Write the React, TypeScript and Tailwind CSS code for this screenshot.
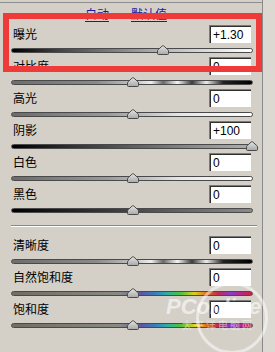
import React from 'react';

type Row = { label: string; value: string; track: string; pos: number };

const tracks = {
  bw: 'bg-[linear-gradient(to_right,#000_0%,#444_20%,#bbb_65%,#fff_100%)]',
  contrast:
    'bg-[linear-gradient(to_right,#6e6e6e_0%,#8a8a8a_35%,#c8c8c8_52%,#eeeeee_58%,#6a6a6a_63%,#f4f4f4_69%,#3c3c3c_75%,#ededed_81%,#222_88%,#000_100%)]',
  grayWhite: 'bg-[linear-gradient(to_right,#6a6a6a_0%,#9a9a9a_40%,#e6e6e6_70%,#fff_100%)]',
  blackGray: 'bg-[linear-gradient(to_right,#000_0%,#3a3a3a_30%,#8a8a8a_75%,#b0b0b0_100%)]',
  blackMid: 'bg-[linear-gradient(to_right,#000_0%,#2a2a2a_30%,#6a6a6a_75%,#8a8a8a_100%)]',
  rainbow:
    'bg-[linear-gradient(to_right,#6e6e66_0%,#8a8a84_45%,#5a5aa0_54%,#3a7fc0_60%,#30b0a0_65%,#4cc040_70%,#d8d020_76%,#e07020_81%,#c02a50_86%,#8a3cc8_91%,#b02a90_95%,#d0203a_100%)]',
};

const rowsTop: Row[] = [
  { label: '曝光', value: '+1.30', track: tracks.bw, pos: 62.8 },
  { label: '对比度', value: '0', track: tracks.contrast, pos: 50.4 },
  { label: '高光', value: '0', track: tracks.grayWhite, pos: 50.4 },
  { label: '阴影', value: '+100', track: tracks.blackGray, pos: 100 },
  { label: '白色', value: '0', track: tracks.grayWhite, pos: 50.4 },
  { label: '黑色', value: '0', track: tracks.blackMid, pos: 50.4 },
];

const rowsBottom: Row[] = [
  { label: '清晰度', value: '0', track: tracks.contrast, pos: 50.4 },
  { label: '自然饱和度', value: '0', track: tracks.rainbow, pos: 50.4 },
  { label: '饱和度', value: '0', track: tracks.rainbow, pos: 50.4 },
];

function Thumb() {
  return (
    <svg width="12" height="10" viewBox="0 0 12 10">
      <defs>
        <linearGradient id="tg" x1="0" y1="0" x2="0" y2="1">
          <stop offset="0" stopColor="#e4e4e4" />
          <stop offset="1" stopColor="#a8a8a8" />
        </linearGradient>
      </defs>
      <path d="M1.5 9.5 Q0.5 9.5 0.5 8.5 V6 Q0.5 5.2 1.2 4.6 L5.2 1 Q6 0.4 6.8 1 L10.8 4.6 Q11.5 5.2 11.5 6 V8.5 Q11.5 9.5 10.5 9.5 Z" fill="url(#tg)" stroke="#4a4a4a" strokeWidth="1" />
    </svg>
  );
}

function SliderRow({ row }: { row: Row }) {
  return (
    <div>
      <div className="h-[18px] flex items-center justify-between pl-[13px] pr-[11px]">
        <span className="text-[12px] leading-none text-black">{row.label}</span>
        <div className="w-[42px] h-[18px] bg-white border-t border-l border-[#7a7a7a] border-b-[#ffffff] border-r-[#ffffff] shadow-[inset_1px_1px_0_#303030] pl-[3px] flex items-center font-['Liberation_Sans',sans-serif] text-[12px] text-black">
          {row.value}
        </div>
      </div>
      <div className="h-[14px] flex items-center pl-[11px]">
        <div className={`relative w-[242px] h-[5px] rounded-full border border-[#4a4a4a] ${row.track}`}>
          <div className="absolute top-[-4px] -translate-x-1/2" style={{ left: `${row.pos}%` }}>
            <Thumb />
          </div>
        </div>
      </div>
    </div>
  );
}

export default function App() {
  return (
    <div className="relative w-[275px] h-[352px] overflow-hidden bg-[#dcd9d2] font-['Noto_Sans_CJK_SC','Noto_Sans',sans-serif]">
      <div className="w-[263px] h-full pt-[2px] bg-[#d4d0c8] border-r border-[#8a8a8a]">
        <div className="border-t border-[#8e8e8e] h-full">
          {/* links */}
          <div className="h-[22px] pt-[4px] flex justify-center gap-[22px] pr-[10px] text-[12px] leading-[14px] text-[#1a1aa0]">
            <span className="underline underline-offset-2">自动</span>
            <span className="underline underline-offset-2">默认值</span>
          </div>

          {rowsTop.map((r) => (
            <SliderRow key={r.label} row={r} />
          ))}

          {/* separator */}
          <div className="h-[19px] pt-[8px] pl-[11px] pr-[5px]">
            <div className="border-t border-[#8a8a8a] border-b border-b-white" />
          </div>

          {rowsBottom.map((r) => (
            <SliderRow key={r.label} row={r} />
          ))}
        </div>
      </div>

      {/* red highlight box */}
      <div className="absolute left-[3px] top-[13px] w-[259px] h-[59px] border-[6px] border-[#ef3a3a]" />

      {/* watermark */}
      <div className="absolute left-[196px] top-[282px] w-[72px] h-[72px] rounded-full border-[3px] border-white/50 pointer-events-none" />
      <div className="absolute left-[166px] top-[296px] text-[22px] leading-none font-bold italic text-white/60 font-['Liberation_Sans',sans-serif] pointer-events-none">
        PConline
      </div>
      <div className="absolute left-[182px] top-[320px] text-[10px] leading-none text-white/50 tracking-[2px] pointer-events-none">
        太平洋电脑网
      </div>
    </div>
  );
}
